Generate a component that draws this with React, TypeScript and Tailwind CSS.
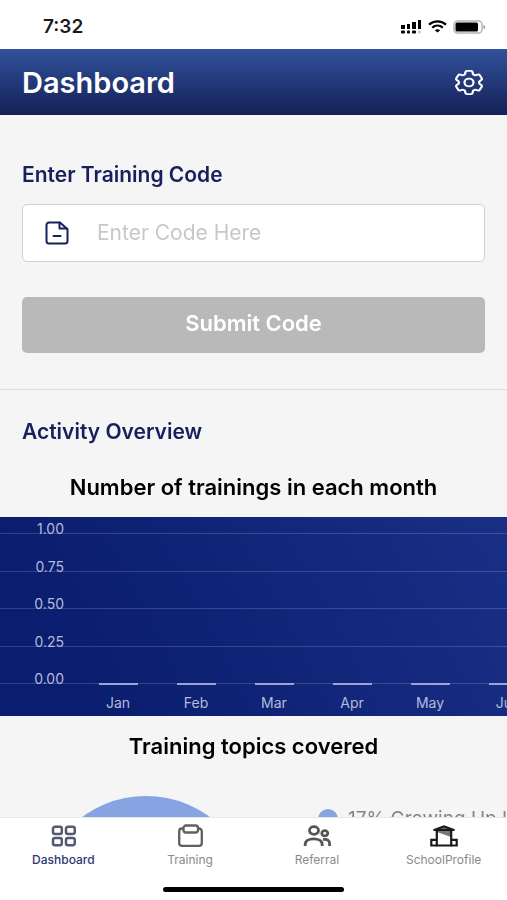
import type { ReactNode } from "react";
import { HiOutlineCog6Tooth } from "react-icons/hi2";

const MONTHS = [
  "Jan",
  "Feb",
  "Mar",
  "Apr",
  "May",
  "Jun",
  "Jul",
  "Aug",
  "Sep",
  "Oct",
  "Nov",
  "Dec",
];

const Y_TICKS = ["1.00", "0.75", "0.50", "0.25", "0.00"];

export default function App() {
  return (
    <div className="flex h-screen flex-col bg-white font-['Inter',sans-serif]">
      <StatusBar />

      {/* Header */}
      <header className="flex h-[66px] shrink-0 items-center justify-between bg-linear-to-b from-[#31529d] to-[#152156] pt-px pr-5 pl-[22px]">
        <h1 className="text-[29px] leading-8 font-semibold text-white">
          Dashboard
        </h1>
        <button type="button" aria-label="Settings" className="text-white">
          <HiOutlineCog6Tooth
            preserveAspectRatio="none"
            className="h-[31px] w-9"
          />
        </button>
      </header>

      <main className="min-h-0 flex-1 overflow-y-auto bg-[#f5f5f5] [scrollbar-width:none]">
        <TrainingCodeForm />

        <section className="border-t border-[#dfdfdf]">
          <h2 className="px-[22px] pt-[30px] text-[21px] leading-6 font-semibold text-[#17205c]">
            Activity Overview
          </h2>

          <h3 className="pt-[31px] text-center text-[22px] leading-6 font-semibold text-black">
            Number of trainings in each month
          </h3>
          <MonthChart />

          <h3 className="pt-[18px] text-center text-[22px] leading-6 font-semibold text-black">
            Training topics covered
          </h3>
          <TopicsChart />
        </section>
      </main>

      <BottomNav />
    </div>
  );
}

function StatusBar() {
  return (
    <div className="flex h-[49px] shrink-0 items-center justify-between pt-1 pr-[21px] pl-[43px]">
      <span className="text-[19px] leading-6 font-semibold text-[#1a1a1a]">
        7:32
      </span>
      <div className="flex items-center gap-[6px]">
        {/* Signal */}
        <svg width="21" height="14" viewBox="0 0 21 14" fill="#000">
          <rect x="0" y="5" width="4" height="4" />
          <rect x="6" y="4" width="3" height="5" />
          <rect x="11" y="2" width="4" height="7" />
          <rect x="17" y="0" width="3" height="9" />
          <rect x="0" y="10.500" width="4" height="3" rx="1" />
          <rect x="6" y="10.500" width="3" height="3" rx="1" />
          <rect x="11" y="10.500" width="4" height="3" rx="1" />
          <rect x="17" y="10.500" width="3" height="3" rx="1" fill="#ccc" />
        </svg>
        {/* Wi-Fi */}
        <svg
          width="19"
          height="13"
          viewBox="0 0 19 13"
          fill="none"
          stroke="#000"
          strokeWidth="2.200"
        >
          <path d="M1 4.600C5.800 0.300 13.200 0.300 18 4.600" />
          <path d="M4.200 7.700C7.300 5 11.700 5 14.800 7.700" />
          <path d="M9.500 12.500 6.800 10.300Q9.500 8.300 12.200 10.300Z" fill="#000" stroke="none" />
        </svg>
        {/* Battery */}
        <svg width="33" height="14" viewBox="0 0 33 14">
          <rect
            x="1"
            y="1"
            width="28"
            height="12"
            rx="3.500"
            fill="#fff"
            stroke="#b5b5b5"
            strokeWidth="1.500"
          />
          <rect x="2.500" y="2.500" width="22.500" height="9" rx="1.500" fill="#000" />
          <path d="M30.500 5v4c2.300-.7 2.300-3.300 0-4Z" fill="#999" />
        </svg>
      </div>
    </div>
  );
}

function TrainingCodeForm() {
  return (
    <form className="px-[22px] pt-12 pb-9">
      <label
        htmlFor="training-code"
        className="block text-[21px] leading-6 font-semibold text-[#17205c]"
      >
        Enter Training Code
      </label>
      <div className="mt-[17px] flex h-[58px] items-center rounded-[5px] border border-[#cfcfcf] bg-white pl-[22px]">
        <svg
          width="24"
          height="24"
          viewBox="0 0 24 24"
          fill="none"
          stroke="#17205c"
          strokeWidth="2"
          strokeLinecap="round"
          strokeLinejoin="round"
          className="shrink-0"
        >
          <path d="M15 1.500H4A2.500 2.500 0 0 0 1.500 4v16A2.500 2.500 0 0 0 4 22.500h16a2.500 2.500 0 0 0 2.500-2.500V8.200Z" />
          <path d="M14.500 1.700V7.500h7.500" />
          <path d="M8.500 15h7" />
        </svg>
        <input
          id="training-code"
          type="text"
          placeholder="Enter Code Here"
          className="ml-7 min-w-0 flex-1 bg-transparent text-[21px] leading-6 text-[#17205c] outline-none placeholder:text-[#c8c8c8]"
        />
      </div>
      <button
        type="button"
        className="mt-[35px] h-14 w-full rounded-[5px] bg-[#b9b9b9] pb-1 text-[22px] leading-6 font-semibold text-white"
      >
        Submit Code
      </button>
    </form>
  );
}

function MonthChart() {
  const step = 78;
  const width = 99 + MONTHS.length * step;

  return (
    <div className="mt-[18px] overflow-x-auto bg-[#0c1f70] [scrollbar-width:none]">
      <svg
        width={width}
        height="199"
        role="img"
        aria-label="Number of trainings in each month"
        className="block max-w-none"
        fontSize="14"
      >
        <defs>
          <linearGradient id="chart-bg" x1="0" y1="0.100" x2="1" y2="0">
            <stop offset="0" stopColor="#0a1d6e" />
            <stop offset="0.480" stopColor="#192f85" />
            <stop offset="1" stopColor="#2a429c" />
          </linearGradient>
        </defs>
        <rect width={width} height="199" fill="url(#chart-bg)" />
        {Y_TICKS.map((tick, i) => {
          const y = Math.round(16 + i * 37.5);
          return (
            <g key={tick}>
              <rect y={y} width={width} height="1" fill="#fff" opacity="0.170" />
              <text x="64" y={y + 1} textAnchor="end" fill="#b3bbdc">
                {tick}
              </text>
            </g>
          );
        })}
        {MONTHS.map((month, i) => (
          <g key={month}>
            <rect x={99 + i * step} y="166" width="39" height="2" fill="#9aa5d3" />
            <text
              x={118 + i * step}
              y="191"
              textAnchor="middle"
              fill="#b3bbdc"
            >
              {month}
            </text>
          </g>
        ))}
      </svg>
    </div>
  );
}

function TopicsChart() {
  return (
    <div className="flex items-start overflow-hidden pt-[38px] pl-[38px]">
      <svg width="216" height="216" viewBox="0 0 216 216" className="shrink-0">
        <circle cx="108" cy="108" r="108" fill="#87a3e2" />
      </svg>
      <div className="mt-[11px] ml-16 flex items-center gap-[10px] whitespace-nowrap">
        <span className="size-5 shrink-0 rounded-full bg-[#87a3e2]" />
        <span className="text-[19px] leading-6 text-[#858585]">
          17% Growing Up Healthy
        </span>
      </div>
    </div>
  );
}

function BottomNav() {
  return (
    <footer className="shrink-0 border-t border-[#e8e8e8] bg-white">
      <nav className="grid grid-cols-4 pt-[6px]">
        <NavItem label="Dashboard" active>
          <svg
            width="26"
            height="22"
            viewBox="-1 0 26 22"
            fill="none"
            stroke="#555a70"
            strokeWidth="2.500"
          >
            <rect x="2" y="1.700" width="8.800" height="7.200" rx="2" />
            <rect x="15" y="1.700" width="8.800" height="7.200" rx="2" />
            <rect x="2" y="13" width="8.800" height="7.200" rx="2" />
            <rect x="15" y="13" width="8.800" height="7.200" rx="2" />
          </svg>
        </NavItem>
        <NavItem label="Training">
          <svg
            width="26"
            height="24"
            viewBox="0 0 26 24"
            fill="none"
            stroke="#606060"
            strokeWidth="2.300"
          >
            <path d="M6.500 4.500H5A2.800 2.800 0 0 0 2.200 7.300V19A2.800 2.800 0 0 0 5 21.800h17a2.800 2.800 0 0 0 2.800-2.800V7.300A2.800 2.800 0 0 0 22 4.500h-1" />
            <rect x="6.500" y="1.500" width="14.500" height="7" rx="2.500" />
          </svg>
        </NavItem>
        <NavItem label="Referral">
          <svg
            width="28"
            height="22"
            viewBox="-1 0 28 22"
            fill="none"
            stroke="#555"
            strokeWidth="2.800"
          >
            <ellipse cx="10" cy="5.500" rx="4.500" ry="3.800" />
            <path d="M1.200 21v-1.500c0-7.500 17-7.500 17 0V21" />
            <ellipse cx="20.800" cy="8.300" rx="3" ry="2.600" />
            <path d="M19 14.600c4.300-.8 6.600 1 6.600 4.200V21" />
          </svg>
        </NavItem>
        <NavItem label="SchoolProfile">
          <svg
            width="28"
            height="22"
            viewBox="0 0 28 22"
            fill="none"
            stroke="#1a1a1a"
            strokeWidth="2.200"
          >
            <path d="M7 4.500 14 1.500l7 3v7.500L7 7Z" fill="#777" stroke="none" />
            <path d="M3.500 5.200 14 1.500l10.500 3.700M5 5h18" />
            <path d="M6.800 4.500v16h14.400v-16" />
            <path d="M6.800 14.800H1.300v5.700h5.500M21.200 14.800h5.500v5.700h-5.500" />
          </svg>
        </NavItem>
      </nav>
      {/* Home indicator */}
      <div className="mx-auto mt-[19px] mb-2 h-[5px] w-[181px] rounded-full bg-black" />
    </footer>
  );
}

interface NavItemProps {
  label: string;
  active?: boolean;
  children: ReactNode;
}

function NavItem({ label, active, children }: NavItemProps) {
  return (
    <a href="#" className="flex flex-col items-center">
      <span className="flex h-6 items-center">{children}</span>
      <span
        className={
          active
            ? "mt-1 text-xs leading-4 font-medium text-[#2f3670]"
            : "mt-1 text-xs leading-4 text-[#8a8a8a]"
        }
      >
        {label}
      </span>
    </a>
  );
}
